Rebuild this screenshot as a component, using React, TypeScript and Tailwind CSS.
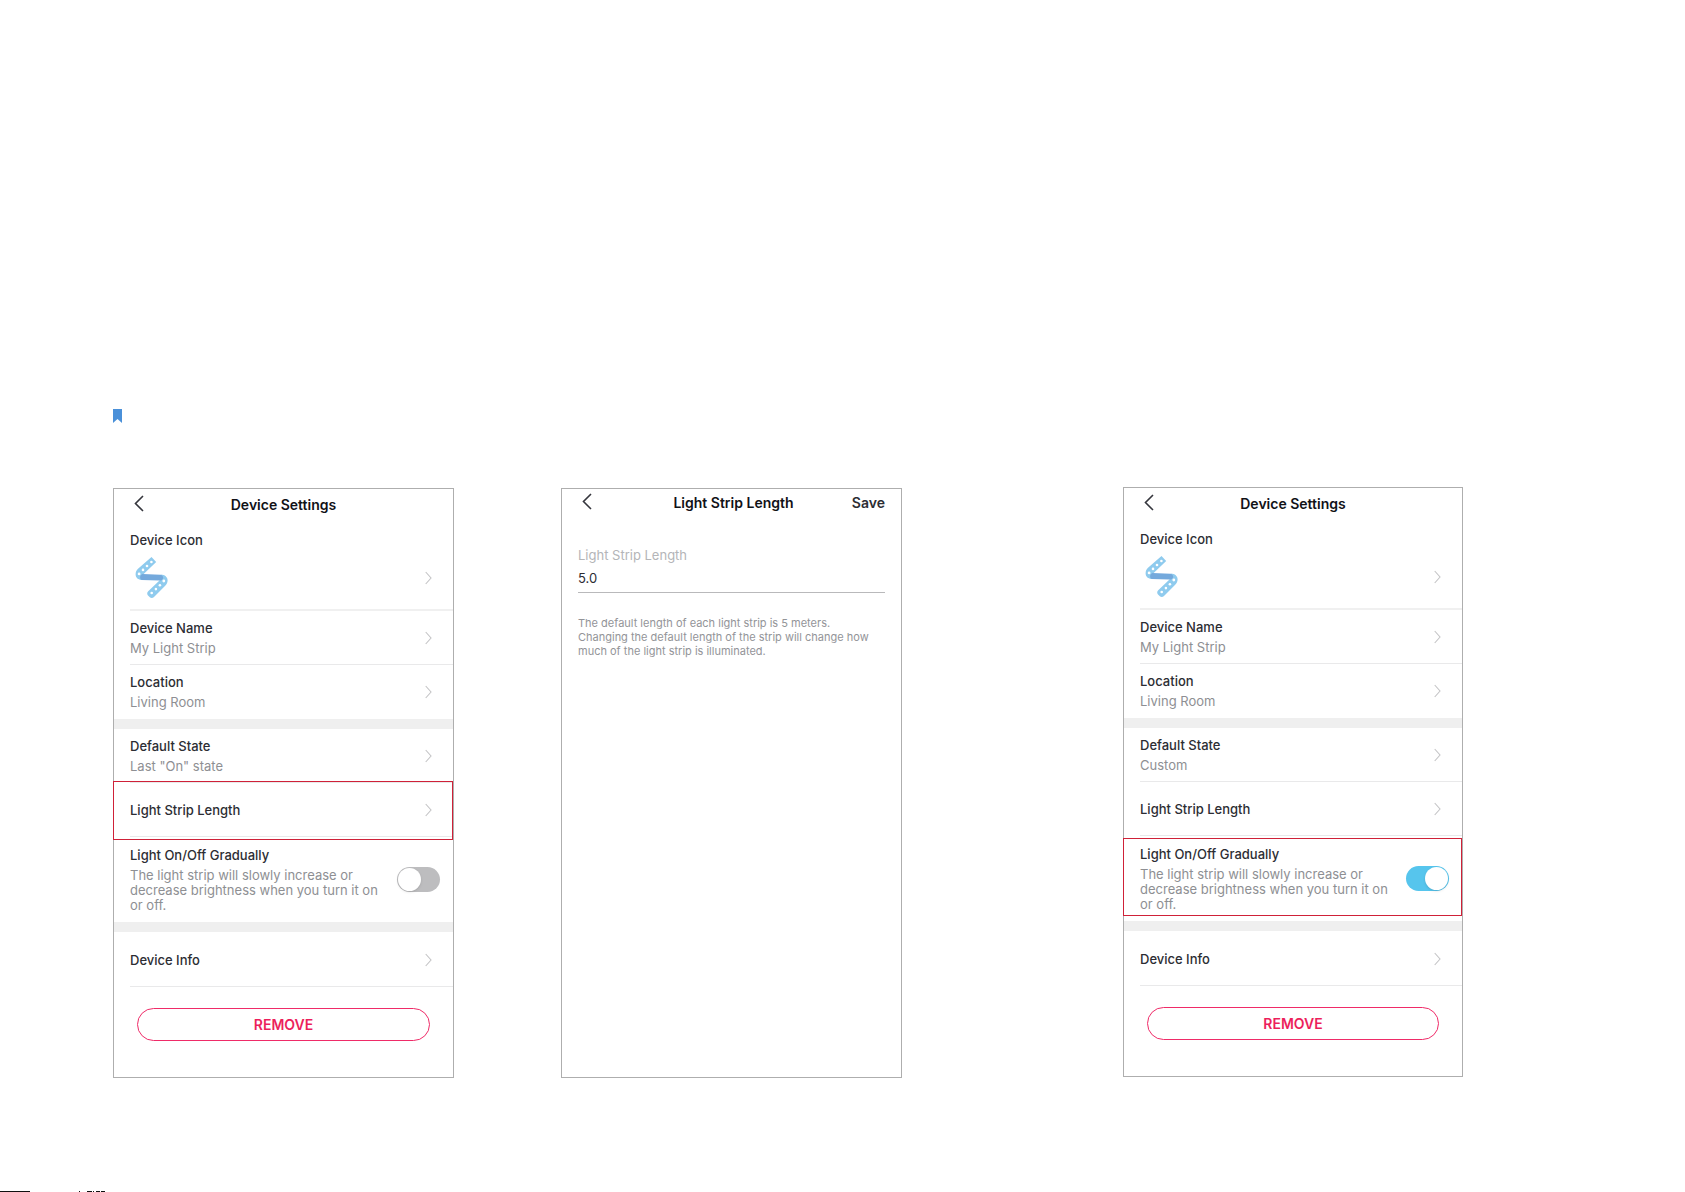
import { useId, useState } from "react"
import type { ReactNode } from "react"

function BackIcon() {
  return (
    <svg width="10" height="17" viewBox="0 0 10 17" fill="none" stroke="#35363d" strokeWidth="1.6">
      <path d="M9 1 1.5 8.5 9 16" />
    </svg>
  )
}

function Chevron() {
  return (
    <svg className="shrink-0" width="7" height="14" viewBox="0 0 7 14" fill="none" stroke="#c4c4c6" strokeWidth="1.1">
      <path d="M.7 1 6 7 .7 13" />
    </svg>
  )
}

function StripIcon() {
  return (
    <svg width="33" height="41" viewBox="0 0 33 41" fill="none">
      {/* upper tape */}
      <path d="M16.5 0 21.2 5 8.4 17.2C7 18.6 6.6 20 7.4 23 3 23 .6 20.5 .6 17.5 .6 15 1.4 13.2 3 11.8Z" fill="#8fcbee" />
      {/* lower tape */}
      <path d="M25.8 17.6C30 17.8 32.6 20.3 32.6 23.3 32.6 25.5 31.8 27.2 30.2 28.8L19 40C17.8 41.2 16 41.3 14.8 40.2L13 38.4C11.8 37.1 12 35.4 13.2 34.2L25 23Z" fill="#8fcbee" />
      {/* folded middle */}
      <path d="M7.5 17.1 25.5 17.7C27.2 18 28.4 19.5 28.1 21 27.8 22.8 26.4 23.6 24.5 23.6L6.8 23C4.3 22 4.7 18 7.5 17.1Z" fill="#74a9dc" />
      <g fill="#fff">
        <circle cx="16.4" cy="5" r="1.3" />
        <circle cx="12" cy="9" r="1.3" />
        <circle cx="8" cy="12.9" r="1.3" />
        <circle cx="4.1" cy="16.9" r="1.4" />
        <circle cx="28.8" cy="24" r="1.4" />
        <circle cx="24.9" cy="28.2" r="1.3" />
        <circle cx="20.9" cy="32.1" r="1.3" />
        <circle cx="16.7" cy="36" r="1.3" />
      </g>
    </svg>
  )
}

function Highlight({ className }: { className: string }) {
  return <span className={`absolute -left-px right-0 border border-[#cf2138] pointer-events-none ${className}`} />
}

type RowProps = { title: string; value?: string; last?: boolean; children?: ReactNode }

function Row({ title, value, last = false, children }: RowProps) {
  return (
    <div className="relative pl-4">
      <button
        className={`w-full h-[54px] pr-[21px] flex items-center justify-between text-left border-b ${
          last ? "border-transparent" : "border-[#e9e9ea]"
        }`}
      >
        <span className="flex flex-col leading-5">
          <span className="font-medium">{title}</span>
          {value && <span className="text-[#8e8f93]">{value}</span>}
        </span>
        <Chevron />
      </button>
      {children}
    </div>
  )
}

function Band() {
  return <div className="h-[10px] bg-[#efefef]" />
}

type SettingsProps = { state: string; gradual?: boolean; highlight: "length" | "gradual" }

function DeviceSettings({ state, gradual = false, highlight }: SettingsProps) {
  const id = useId()
  const [on, setOn] = useState(gradual)

  return (
    <section className="h-[590px] border border-[#aeaeae] text-[13px] text-[#2c2d33]">
      <header className="h-8 px-5 grid grid-cols-[1fr_auto_1fr] items-center">
        <button aria-label="Back" className="justify-self-start pb-[3px]"><BackIcon /></button>
        <h2 className="text-sm font-semibold text-[#111217]">Device Settings</h2>
      </header>

      <div className="pl-4">
        <button className="w-full h-[90px] pt-[9px] pr-[21px] flex flex-col text-left border-b-2 border-[#f0f0f0]">
          <span className="font-medium leading-5">Device Icon</span>
          <span className="w-full mt-[7px] pl-[5px] flex items-center justify-between">
            <StripIcon />
            <Chevron />
          </span>
        </button>
      </div>
      <Row title="Device Name" value="My Light Strip" />
      <Row title="Location" value="Living Room" last />
      <Band />
      <Row title="Default State" value={state} />
      <Row title="Light Strip Length">
        {highlight === "length" && <Highlight className="-top-[2px] -bottom-[3px]" />}
      </Row>

      <div className="relative h-[85px] pl-4 pr-[13px] flex items-center justify-between">
        <label htmlFor={id} className="w-[250px] pb-[2px] flex flex-col">
          <span className="font-medium leading-5">Light On/Off Gradually</span>
          <span className="mt-[3px] leading-[15px] text-[#8e8f93]">
            The light strip will slowly increase or decrease brightness when you turn it on or off.
          </span>
        </label>
        <input
          id={id}
          type="checkbox"
          role="switch"
          checked={on}
          onChange={e => setOn(e.target.checked)}
          className="
            appearance-none shrink-0 w-[43px] h-[25px] rounded-full bg-[#bdbdbf] p-px
            before:block before:size-[23px] before:rounded-full before:bg-white before:shadow-sm
            checked:bg-[#56c5ed] checked:before:translate-x-[18px]
          "
        />
        {highlight === "gradual" && <Highlight className="top-[2px] bottom-[5px]" />}
      </div>
      <Band />
      <div className="pt-px">
        <Row title="Device Info" />
      </div>

      <div className="px-[23px] pt-[21px]">
        <button className="w-full h-[33px] rounded-full border border-[#ef2b68] text-sm font-semibold text-[#ec1f5c]">
          REMOVE
        </button>
      </div>
    </section>
  )
}

function StripLength() {
  const [length, setLength] = useState("5.0")

  return (
    <section className="h-[590px] px-4 border border-[#aeaeae] text-[#2c2d33]">
      <header className="h-7 pl-1 grid grid-cols-[1fr_auto_1fr] items-center">
        <button aria-label="Back" className="justify-self-start pb-[3px]"><BackIcon /></button>
        <h2 className="text-sm font-semibold text-[#111217]">Light Strip Length</h2>
        <button className="justify-self-end text-sm font-semibold">Save</button>
      </header>

      <label htmlFor="strip-length" className="block mt-7 text-[13px] leading-5 text-[#b4b5b8]">
        Light Strip Length
      </label>
      <input
        id="strip-length"
        value={length}
        onChange={e => setLength(e.target.value)}
        className="block w-full h-7 pb-px text-[13px] border-b border-[#b9b9bb] outline-none"
      />
      <p className="mt-[23px] text-[11px] leading-[14px] text-[#939498]">
        The default length of each light strip is 5 meters.
        <br />
        Changing the default length of the strip will change how
        <br />
        much of the light strip is illuminated.
      </p>
    </section>
  )
}

export default function App() {
  return (
    <main className="min-h-screen bg-white flex flex-col font-['Inter',sans-serif]">
      <div className="pt-[409px] pl-[113px] pr-[222px]">
        <svg width="9" height="14" viewBox="0 0 9 14" fill="#4a90d9">
          <path d="M0 0H9V14L4.500 10 0 14Z" />
        </svg>

        <div className="mt-[64px] flex items-start gap-[221px]">
          <div className="flex-[789] mt-px grid grid-cols-2 gap-[107px]">
            <DeviceSettings state={'Last "On" state'} highlight="length" />
            <StripLength />
          </div>
          <div className="flex-[340]">
            <DeviceSettings state="Custom" gradual highlight="gradual" />
          </div>
        </div>
      </div>

      {/* top edge of the footer text, cut by the page end */}
      <svg className="mt-auto" width="110" height="1" viewBox="0 0 110 1" shapeRendering="crispEdges">
        <path d="M0 0H30V1H0ZM79 0H80V1H79ZM87 0H92V1H87ZM93 0H94V1H93ZM96 0H100V1H96ZM101 0H105V1H101Z" fill="#111" />
      </svg>
    </main>
  )
}
